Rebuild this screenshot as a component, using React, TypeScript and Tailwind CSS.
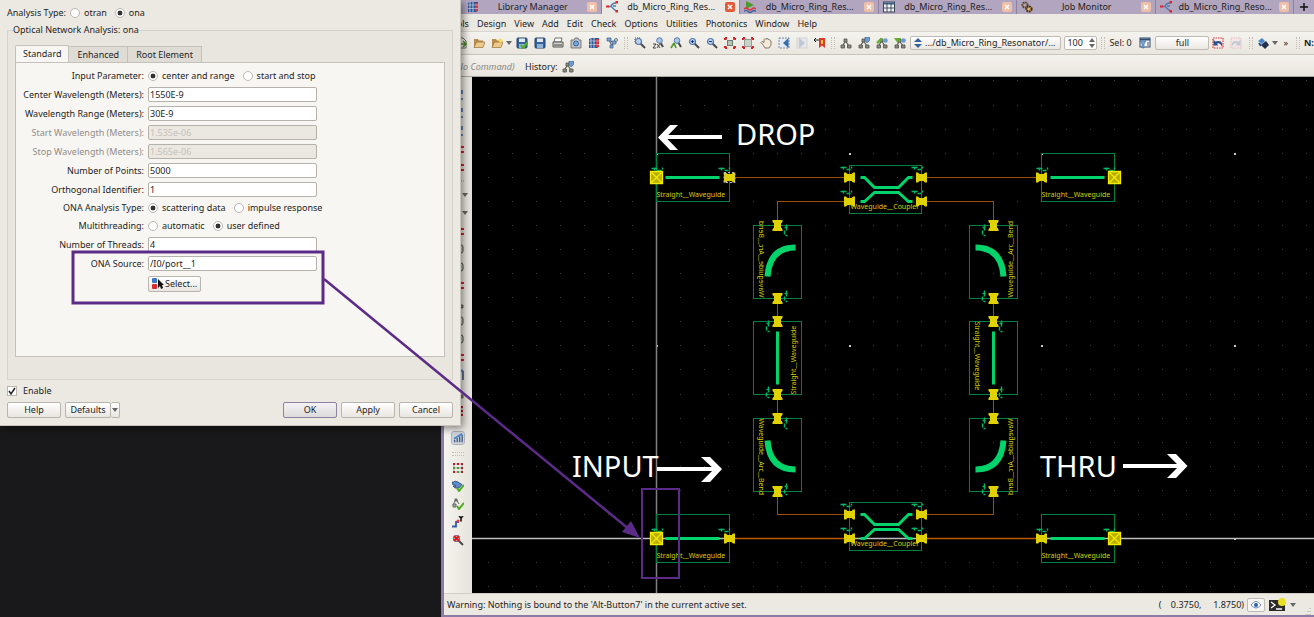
import React, { useId } from 'react';

type IconName =
  | 'library' | 'network' | 'simulate' | 'table' | 'gears' | 'open' | 'folder' | 'folderNew' | 'saveCheck' | 'save'
  | 'print' | 'camera' | 'hierarchy' | 'zoomArea' | 'zoom2x' | 'zoomTree' | 'zoomIn' | 'zoomOut' | 'fit' | 'fitSel'
  | 'hand' | 'prev' | 'next' | 'bookmark' | 'tree' | 'treeDown' | 'treeEdit' | 'treeGreen' | 'filter' | 'undo'
  | 'redo' | 'layers' | 'signal' | 'grid' | 'checkChip' | 'checkTree' | 'wire' | 'probe' | 'blueMark' | 'redMark'
  | 'loop' | 'eye' | 'pick';

const lens = (
  <>
    <path d="M6.5 6.5l4.5 4.5" stroke="#4a4a4a" strokeWidth="2" />
    <circle cx="4.5" cy="4.5" r="3" fill="#b8d2f0" stroke="#5878a8" strokeWidth="1.2" />
  </>
);

const branch = (
  <>
    <path d="M5.500 4L3 8M5.500 4L9 9" stroke="#5f6058" strokeWidth="1.200" />
    <path d="M4 2h3v3H4zM1 8h3.500v3H1zM7.500 8H11v3H7.500z" fill="#8d8e84" stroke="#4f5048" strokeWidth=".8" />
  </>
);

const disk = (
  <>
    <rect x="1" y="1" width="10" height="10" rx="1" fill="#35649c" stroke="#24436b" />
    <rect x="3" y="1.5" width="6" height="3.5" fill="#dfe7ef" />
    <rect x="3" y="7" width="6" height="4" fill="#8fb2d6" />
  </>
);

const folder = (
  <>
    <path d="M1 2h4l1 1.500h4v2H4L2 10H1z" fill="#b98d50" />
    <path d="M1 10.500L3.500 5H12l-2 5.500z" fill="#edc98c" stroke="#9a7038" strokeWidth=".7" />
  </>
);

const corners = <path d="M1 1h2M1 1v2M11 1H9M11 1v2M1 11h2M1 11V9M11 11H9M11 11V9" stroke="#e02020" strokeWidth="2" />;

const glyphs: Record<IconName, React.ReactNode> = {
  library: (
    <>
      <path d="M1 2l2-1h8v9l-2 1H1z" fill="#2f5590" />
      <path d="M3 1v10M6 1v10" stroke="#a9c8ea" />
      <path d="M8 2h3v8H8z" fill="#d6393f" />
      <path d="M1 4h10M1 7.500h10" stroke="#e8eef6" strokeWidth=".5" />
    </>
  ),
  network: (
    <>
      <path d="M2 5.500h3M5 5.500C6 2 8 2 10 2M5 5.500l5 4.500M7 5h3" stroke="#4c7cb4" strokeWidth="1.4" fill="none" />
      <path d="M0 4.500h3v2H0zM9.500 0H12v2.500H9.500zM9.500 9H12v2.500H9.500z" fill="#e3242b" />
    </>
  ),
  simulate: (
    <>
      <path d="M2 0l8 4-8 4z" fill="#4c9a2a" />
      <path d="M0 8q2-2 4 0t4 0 4 0" stroke="#d33" strokeWidth="1.5" fill="none" />
      <path d="M0 10.500q2-2 4 0t4 0 4 0" stroke="#35649c" strokeWidth="1.2" fill="none" />
    </>
  ),
  table: (
    <>
      <rect x=".5" y="1" width="11" height="10" fill="#eef2f6" stroke="#3a4654" />
      <path d="M.5 2.500h11" stroke="#3a5f8c" strokeWidth="2" />
      <path d="M4 2v9M8 2v9M1 7h10" stroke="#3a4654" strokeWidth=".9" />
    </>
  ),
  gears: (
    <>
      <circle cx="4" cy="4" r="2.600" fill="none" stroke="#5e4a28" strokeWidth="2" strokeDasharray="1.800 .6" />
      <circle cx="8" cy="8" r="2.600" fill="#e9b35a" stroke="#3d3320" strokeWidth="2" strokeDasharray="1.800 .6" />
    </>
  ),
  open: (
    <>
      <path d="M1 1h7l3 3v7H1z" fill="#f5f5f2" stroke="#666" />
      <path d="M3 7h8M8 4l3 3-3 3" stroke="#4f8a28" strokeWidth="1.600" fill="none" />
    </>
  ),
  folder,
  folderNew: (
    <>
      {folder}
      <circle cx="9.500" cy="3.500" r="2" fill="#f6df4e" />
    </>
  ),
  saveCheck: (
    <>
      {disk}
      <path d="M5 8l2 3 5-6" stroke="#4fae20" strokeWidth="2" fill="none" />
    </>
  ),
  save: disk,
  print: (
    <>
      <path d="M3 1h7l-1 4H2z" fill="#fafafa" stroke="#555" strokeWidth=".8" />
      <path d="M1 5h10v5H1z" fill="#d5d5cf" stroke="#555" />
      <path d="M2 8h8" stroke="#444" />
    </>
  ),
  camera: (
    <>
      <path d="M1 3h3l1-2h3l1 2h2v8H1z" fill="#bfc3c8" stroke="#666" strokeWidth=".8" />
      <circle cx="6" cy="6.500" r="2.500" fill="#79a8dc" stroke="#35649c" />
    </>
  ),
  hierarchy: (
    <>
      <path d="M3 3l3 6M9 3L6 9M3 3l5 3" stroke="#555" />
      <path d="M1 1h4v3H1zM6 4h4v3H6zM4 8h3v3H4z" fill="#7da4d6" stroke="#3c5f91" strokeWidth=".7" />
      <circle cx="10" cy="3" r="1.500" fill="#c6d8ee" stroke="#456" strokeWidth=".7" />
    </>
  ),
  zoomArea: (
    <>
      <path d="M1 1h5v5H1z" fill="#dfe6ee" stroke="#444" strokeDasharray="1 1" />
      {lens}
    </>
  ),
  zoom2x: (
    <>
      <path d="M8 5l3 5" stroke="#4a4a4a" strokeWidth="2" />
      <circle cx="7.500" cy="3.500" r="2.800" fill="#a8c8ee" stroke="#5878a8" />
      <path d="M1 7h3L1 11h3M5 7l3 4M8 7l-3 4" stroke="#333" fill="none" strokeWidth=".9" />
    </>
  ),
  zoomTree: (
    <>
      <path d="M8 5l3 5" stroke="#4a4a4a" strokeWidth="2" />
      <circle cx="7" cy="3.500" r="2.800" fill="#a8c8ee" stroke="#5878a8" />
      <path d="M4 6l-3 5M4 6l2 5" stroke="#4f9a30" strokeWidth="1.600" />
    </>
  ),
  zoomIn: (
    <>
      {lens}
      <path d="M3 4.500h3M4.500 3v3" stroke="#123c80" />
    </>
  ),
  zoomOut: (
    <>
      {lens}
      <path d="M3 4.500h3" stroke="#123c80" />
    </>
  ),
  fit: (
    <>
      <path d="M2 2l3 3M10 2L7 5M2 10l3-3M10 10L7 7" stroke="#888" />
      <rect x="3.500" y="3.500" width="5" height="5" fill="#b9c4ba" stroke="#6c7c70" />
      {corners}
    </>
  ),
  fitSel: (
    <>
      <rect x="2.500" y="2.500" width="7" height="7" fill="#c8d2c4" stroke="#999" />
      {corners}
    </>
  ),
  hand: (
    <path
      d="M3.500 8.500L1 5.500l1-1 2 1V2.500l1-1 1 1 1-1.500 1 1.500 1-.5 1 1.500 1 .5v4L9 11H5z"
      fill="#f6ead8"
      stroke="#77705f"
      strokeWidth=".9"
    />
  ),
  prev: (
    <>
      <rect x="1" y="1" width="10" height="10" fill="#e3ebf3" stroke="#7c8fa5" strokeDasharray="2 1" />
      <path d="M10.500 1v10L5 6z" fill="#356cac" />
    </>
  ),
  next: (
    <>
      <rect x="1" y="1" width="10" height="10" fill="#e6e6e6" stroke="#d2d4d6" />
      <path d="M3 1v10l6-5z" fill="#bcc8d6" />
    </>
  ),
  bookmark: (
    <>
      <path d="M5 1h6v10L8 8.500 5 11z" fill="#d43b28" />
      <path d="M7 3h2v4H7z" fill="#f5c542" />
      <path d="M0 3h5M2 1L0 3l2 2" stroke="#222" fill="none" />
    </>
  ),
  tree: branch,
  treeDown: (
    <>
      {branch}
      <path d="M7 0h4.500v3.500L9.200 6 7 3.500z" fill="#6c9bd4" stroke="#3c6499" strokeWidth=".7" />
    </>
  ),
  treeEdit: (
    <>
      {branch}
      <path d="M1 6L6 1.500" stroke="#63b030" strokeWidth="2.400" />
      <circle cx="9.500" cy="3.500" r="2.300" fill="#6c9bd4" />
    </>
  ),
  treeGreen: (
    <>
      {branch}
      <path d="M0 1h7L3.500 6z" fill="#63b030" />
      <circle cx="9.500" cy="3.500" r="2.300" fill="#6c9bd4" />
    </>
  ),
  filter: (
    <>
      <rect x="1" y="1" width="10" height="9" fill="#f4f6f8" stroke="#2f4c70" />
      <path d="M1 2.500h10" stroke="#2f4c70" strokeWidth="2" />
      <path d="M1 4h6L5 7v4H3V7z" fill="#7ba7da" stroke="#3c6499" strokeWidth=".6" />
      <path d="M8 6h2M8 8h2" stroke="#555" />
    </>
  ),
  undo: (
    <>
      <rect x="1" y="1" width="10" height="10" fill="#fbeaea" stroke="#e03434" strokeWidth="1.200" strokeDasharray="1.500 1" />
      <path d="M1.500 2.500v6h5L4.800 6.800Q8 5 10 10q1.500-7.500-6.800-5.500z" fill="#28518c" />
    </>
  ),
  redo: (
    <>
      <rect x="1" y="1" width="10" height="10" fill="#f3e9e8" stroke="#e8b8b4" strokeDasharray="1.500 1" />
      <path d="M10.500 2.500v6h-5l1.700-1.700Q4 5 2 10 .5 2.500 8.800 4.500z" fill="#c3cad4" />
    </>
  ),
  layers: (
    <>
      <path d="M1 4l4-3 3 3-3 3z" fill="#4a86c8" />
      <path d="M4 8l5-4 3 4-4 4z" fill="#23324a" />
      <path d="M2 6l2 3" stroke="#1a4f9c" strokeWidth="2" />
    </>
  ),
  signal: (
    <>
      <path d="M2 11V8M5 11V6M8 11V4M11 11V2" stroke="#33527c" strokeWidth="1.500" />
      <path d="M1 7l10-6" stroke="#4a86c8" strokeWidth="2" />
    </>
  ),
  grid: (
    <>
      <path d="M1 1h2v2H1zM5 1h2v2H5zM9 1h2v2H9zM1 9h2v2H1zM9 5h2v2H9zM9 9h2v2H9z" fill="#b3202c" />
      <path d="M1 5h2v2H1zM5 5h2v2H5zM5 9h2v2H5z" fill="#4f9a30" />
      <path d="M3 2h2M7 2h2M3 6h2M7 6h2M3 10h2M7 10h2M2 3v2M2 7v2M10 3v2M10 7v2" stroke="#777" strokeWidth=".6" />
    </>
  ),
  checkChip: (
    <>
      <path d="M0 2h2l1-1 3 1 4 2.500L7 8H3L1 6h3L0 4z" fill="#5b8cc8" stroke="#2b4a75" strokeWidth=".8" />
      <path d="M5 8l2 3 5-6" stroke="#4fae20" strokeWidth="2" fill="none" />
    </>
  ),
  checkTree: (
    <>
      <path d="M4 1L1 7M4 1l3 5M1 6h3v3H1zM3 1h2v2H3z" fill="#aaa" stroke="#666" />
      <path d="M5 8l2 3 5-6" stroke="#4fae20" strokeWidth="2" fill="none" />
    </>
  ),
  wire: (
    <>
      <path d="M0 10.500h4V6h3" stroke="#2f5fa8" strokeWidth="1.800" fill="none" />
      <circle cx="6" cy="5" r="1.500" fill="#e33" />
      <path d="M7 0l2 2 2-2M9 2v3.500" stroke="#111" strokeWidth="1.600" fill="none" />
    </>
  ),
  probe: (
    <>
      {lens}
      <path d="M2 2l5 5M7 2L2 7" stroke="#e01818" strokeWidth="2" />
    </>
  ),
  blueMark: <path d="M1 2h10M1 10h10M8 4h3" stroke="#3a67a8" strokeWidth="1.600" />,
  redMark: (
    <>
      <path d="M1 6h8" stroke="#777" />
      <path d="M9 3h3v2H9zM9 8h3v2H9z" fill="#d8232b" />
    </>
  ),
  loop: <rect x="2" y="2" width="9" height="8" rx="2" fill="#c3d0b4" stroke="#55584e" />,
  eye: (
    <>
      <path d="M1 6q5-7 10 0-5 6-10 0z" fill="#fff" stroke="#7090c0" />
      <circle cx="6" cy="6" r="2" fill="#2f5fa8" />
    </>
  ),
  pick: (
    <>
      <rect x="0" y="0" width="5" height="5" rx="1" fill="#3d78c4" />
      <rect x="0" y="6" width="5" height="5" rx="1" fill="#dd2a2a" />
      <path d="M6 1v9l2-2 1 3 2-1-1-3h2z" fill="#111" />
    </>
  ),
};

const Icon: React.FC<{ name: IconName; className?: string }> = ({ name, className = 'size-3' }) => (
  <svg viewBox="0 0 12 12" fill="none" className={`${className} shrink-0`} aria-hidden="true">
    {glyphs[name]}
  </svg>
);

const Caret = () => (
  <svg viewBox="0 0 6 4" className="h-1 w-[6px] shrink-0" aria-hidden="true">
    <path d="M0 0h6L3 4z" fill="#666" />
  </svg>
);

const Grip: React.FC<{ className?: string }> = ({ className = 'mx-1' }) => (
  <span className={`${className} h-3 w-1 shrink-0 border-x border-dotted border-[#c2beb6]`} />
);

const ToolButton: React.FC<{ name: IconName }> = ({ name }) => (
  <button type="button" aria-label={name} className="flex h-[18px] w-[18px] shrink-0 items-center justify-center">
    <Icon name={name} />
  </button>
);

/* ---------- Simulation dialog ---------- */

const Radio: React.FC<{ name: string; label: string; checked?: boolean }> = ({ name, label, checked }) => (
  <label className="flex items-center gap-1">
    <input
      type="radio"
      name={name}
      defaultChecked={checked}
      className="size-[10px] appearance-none rounded-full border border-[#bab7b1] bg-white checked:bg-[radial-gradient(circle,#333_38%,#fff_48%)]"
    />
    {label}
  </label>
);

const RadioRow: React.FC<{ label: string; name: string; options: string[]; selected: string }> = ({
  label, name, options, selected,
}) => (
  <div className="grid h-[18px] grid-cols-[128px_1fr] items-center gap-x-1" role="radiogroup" aria-label={label}>
    <span className="text-right">{label}</span>
    <div className="flex gap-2">
      {options.map((o) => (
        <Radio key={o} name={name} label={o} checked={o === selected} />
      ))}
    </div>
  </div>
);

const FieldRow: React.FC<{ label: string; value: string; disabled?: boolean }> = ({ label, value, disabled }) => {
  const id = useId();
  return (
    <div className="grid h-[19px] grid-cols-[128px_1fr] items-center gap-x-1">
      <label htmlFor={id} className={`text-right ${disabled ? 'text-[#908d88]' : ''}`}>{label}</label>
      <input
        id={id}
        defaultValue={value}
        disabled={disabled}
        className="h-[15px] w-[169px] rounded-xs border border-[#b5b2ac] bg-white px-px disabled:bg-[#ebe8e2] disabled:text-[#c4c1bb]"
      />
    </div>
  );
};

const dialogButton =
  'h-4 rounded-xs border border-[#b8b5af] bg-linear-to-b from-white to-[#e9e6e1]';

const Dialog = () => (
  <section className="absolute top-0 left-0 w-[461px] border-r border-b border-[#c9c5bd] bg-[#ece9e2] px-[7px] pt-1 pb-[7px] shadow-[2px_2px_8px_rgba(0,0,0,0.5)]">
    <div className="flex h-[18px] items-center gap-2" role="radiogroup" aria-label="Analysis Type:">
      <span className="-mr-1">Analysis Type:</span>
      <Radio name="analysis" label="otran" />
      <Radio name="analysis" label="ona" checked />
    </div>

    <fieldset className="border border-[#d6d3cc] bg-[#e9e6df] px-[7px] pb-[22px]">
      <legend className="ml-[-2px] h-4 leading-4">Optical Network Analysis: ona</legend>
      <div className="mt-[7px] flex items-end" role="tablist">
        <button type="button" role="tab" aria-selected="true" className="h-[17px] rounded-t-xs border border-b-0 border-[#c4c1ba] bg-[#f8f6f2] px-[7px]">
          Standard
        </button>
        <button type="button" role="tab" className="h-4 border border-b-0 border-l-0 border-[#c4c1ba] bg-[#dfdcd6] px-2">
          Enhanced
        </button>
        <button type="button" role="tab" className="h-4 border border-b-0 border-l-0 border-[#c4c1ba] bg-[#dfdcd6] px-2">
          Root Element
        </button>
      </div>
      <div className="border border-[#c4c1ba] bg-[#f8f6f2] pt-1 pb-16">
        <RadioRow label="Input Parameter:" name="input" options={['center and range', 'start and stop']} selected="center and range" />
        <FieldRow label="Center Wavelength (Meters):" value="1550E-9" />
        <FieldRow label="Wavelength Range (Meters):" value="30E-9" />
        <FieldRow label="Start Wavelength (Meters):" value="1.535e-06" disabled />
        <FieldRow label="Stop Wavelength (Meters):" value="1.565e-06" disabled />
        <FieldRow label="Number of Points:" value="5000" />
        <FieldRow label="Orthogonal Identifier:" value="1" />
        <RadioRow label="ONA Analysis Type:" name="ona" options={['scattering data', 'impulse response']} selected="scattering data" />
        <RadioRow label="Multithreading:" name="threads" options={['automatic', 'user defined']} selected="user defined" />
        <FieldRow label="Number of Threads:" value="4" />
        <FieldRow label="ONA Source:" value="/I0/port__1" />
        <button type="button" className={`${dialogButton} mt-[3px] ml-[132px] flex items-center gap-px px-[3px]`}>
          <Icon name="pick" />
          Select...
        </button>
      </div>
    </fieldset>

    <label className="mt-[5px] flex items-center gap-[6px]">
      <span className="relative size-[10px]">
        <input type="checkbox" defaultChecked className="block size-[10px] appearance-none border border-[#bab7b1] bg-white" />
        <svg viewBox="0 0 10 10" className="pointer-events-none absolute inset-0" aria-hidden="true">
          <path d="M2 5l2 3 4-6" fill="none" stroke="#222" strokeWidth="1.500" />
        </svg>
      </span>
      Enable
    </label>

    <div className="mt-[5px] flex gap-1">
      <button type="button" className={`${dialogButton} w-[54px]`}>Help</button>
      <div className="flex">
        <button type="button" className={`${dialogButton} w-[46px]`}>Defaults</button>
        <button type="button" aria-label="Defaults menu" className={`${dialogButton} flex w-[9px] items-center justify-center border-l-0`}>
          <Caret />
        </button>
      </div>
      <button type="button" className="ml-auto h-4 w-[54px] rounded-xs border border-[#8c83a0] bg-linear-to-b from-[#f4f2f4] to-[#dedbdd]">
        OK
      </button>
      <button type="button" className={`${dialogButton} w-[54px]`}>Apply</button>
      <button type="button" className={`${dialogButton} w-[54px]`}>Cancel</button>
    </div>
  </section>
);

/* ---------- Schematic drawing ---------- */

// The sheet is a regular lattice, part positions are given in lattice steps.
const STEP = 24.08;
const gx = (k: number) => Math.round(656.2 + k * STEP) + 0.5;
const gy = (k: number) => Math.round(538 - k * STEP) + 0.5;

const Pin: React.FC<{ x: number; y: number; turned?: boolean; boxed?: boolean; selected?: boolean }> = ({
  x, y, turned, boxed, selected,
}) => (
  <g transform={`translate(${x} ${y}) ${turned ? 'rotate(90)' : ''}`}>
    <path d="M-5.500-5H-3.500L-2-3.500H2L3.500-5H5.500V5H3.500L2 3.500H-2L-3.500 5H-5.500z" fill="#e0d200" />
    {boxed && (
      <path d="M-6-6H6V6H-6zM-5-5L5 5M5-5L-5 5" fill="#b8ac00" stroke="#f4ec00" strokeWidth="1.300" />
    )}
    {selected && <path d="M-5.500-5H5.500V5H-5.500z" fill="none" stroke="#b8b8d8" strokeDasharray="2 2" />}
  </g>
);

const PortMark: React.FC<{ x: number; y: number; transform?: string }> = ({ x, y, transform = '' }) => (
  <path
    transform={`translate(${x} ${y}) ${transform}`}
    d="M-5 0H1M-2-1V2M1 2H5M6-1V1"
    fill="none"
    stroke="#00b865"
    strokeWidth="1.4"
  />
);

const Name: React.FC<{ x: number; y: number; children: string; transform?: string }> = ({ x, y, children, transform = '' }) => (
  <text
    transform={`translate(${x} ${y}) ${transform}`}
    className="fill-[#d8ce00] font-['Noto_Sans',sans-serif] text-[7px]"
  >
    {children}
  </text>
);

const Straight: React.FC<{ x: number; y: number; boxed: 'left' | 'right'; selected?: boolean }> = ({ x, y, boxed, selected }) => (
  <g>
    <rect x={x} y={y - 24} width="73" height="48" className="fill-none stroke-[#00823f]" />
    <path d={`M${x + 9} ${y}H${x + 63}`} stroke="#00d46a" strokeWidth="3" />
    <PortMark x={x} y={y - 9} />
    <PortMark x={x + 67} y={y - 9} />
    <Name x={x} y={y + 19}>Straight__Waveguide</Name>
    <Pin x={x} y={y} boxed={boxed === 'left'} />
    <Pin x={x + 73} y={y} boxed={boxed === 'right'} selected={selected} />
  </g>
);

const Coupler: React.FC<{ x: number; y: number }> = ({ x, y }) => (
  <g>
    <rect x={x} y={y - 12} width="72" height="48" className="fill-none stroke-[#00823f]" />
    <path
      d={`M${x + 11} ${y}h4l10 10h24l10-10h4M${x + 11} ${y + 24}h4l10-9h24l10 9h4`}
      fill="none"
      stroke="#00d46a"
      strokeWidth="3"
    />
    <Name x={x + 1} y={y + 31}>Waveguide__Coupler</Name>
    {[0, 24].map((dy) => (
      <g key={dy}>
        <PortMark x={x - 4} y={y + dy - 10} />
        <PortMark x={x + 67} y={y + dy - 10} />
        <Pin x={x} y={y + dy} />
        <Pin x={x + 72} y={y + dy} />
      </g>
    ))}
  </g>
);

const Vertical: React.FC<{ x: number; y: number; body: string; width: number; markX: number; children: React.ReactNode }> = ({
  x, y, body, width, markX, children,
}) => (
  <g>
    <rect x={x - 24} y={y} width="48" height="73" className="fill-none stroke-[#00823f]" />
    <path transform={`translate(${x} ${y})`} d={body} fill="none" stroke="#00d46a" strokeWidth={width} />
    {children}
    <PortMark x={x + markX} y={y + 4} transform="rotate(90)" />
    <PortMark x={x + markX} y={y + 70} transform="rotate(90)" />
    <Pin x={x} y={y} turned />
    <Pin x={x} y={y + 73} turned />
  </g>
);

const gridDots = () => {
  const dots: React.ReactNode[] = [];
  for (let i = -7; i <= 27; i++) {
    for (let j = -2; j <= 19; j++) {
      const major = i % 8 === 0 && j % 8 === 0;
      dots.push(
        <rect key={`${i},${j}`} x={gx(i) - 0.5} y={gy(j) - 0.5} width={major ? 2 : 1} height={major ? 2 : 1} fill={major ? '#c8c8c8' : '#3c3c3c'} />,
      );
    }
  }
  return dots;
};

const Schematic = () => {
  const left = gx(5);
  const right = gx(14);
  const top = gy(15);
  const bottom = gy(0);
  return (
    <svg className="block h-full w-full bg-black" role="img" aria-label="Micro ring resonator schematic">
      <g transform="translate(-472 -77)">
        {gridDots()}
        <path d={`M${gx(0)} 77V593`} stroke="#808080" strokeWidth="1.500" />
        <path d={`M472 ${bottom}H${gx(3)}M${gx(8)} ${bottom}H${gx(11)}M${gx(16)} ${bottom}H2400`} stroke="#bdbdbd" strokeWidth="1.300" />

        <path
          d={`M${gx(3)} ${top}H${gx(8)}M${gx(11)} ${top}H${gx(16)}M${gx(8)} ${gy(14)}H${left}V${gy(13)}M${gx(11)} ${gy(14)}H${right}V${gy(13)}M${left} ${gy(10)}V${gy(9)}M${right} ${gy(10)}V${gy(9)}M${left} ${gy(6)}V${gy(5)}M${right} ${gy(6)}V${gy(5)}M${left} ${gy(2)}V${gy(1)}H${gx(8)}M${right} ${gy(2)}V${gy(1)}H${gx(11)}`}
          fill="none"
          stroke="#a04e08"
        />
        <path d={`M${gx(3)} ${bottom}H${gx(8)}M${gx(11)} ${bottom}H${gx(16)}`} stroke="#c05a00" strokeWidth="1.300" />

        <Straight x={gx(0)} y={top} boxed="left" selected />
        <Straight x={gx(16)} y={top} boxed="right" />
        <Straight x={gx(0)} y={bottom} boxed="left" />
        <Straight x={gx(16)} y={bottom} boxed="right" />
        <Coupler x={gx(8)} y={top} />
        <Coupler x={gx(8)} y={gy(1)} />

        <Vertical x={left} y={gy(13)} body="M18 22Q-8 22-10 51" width={6} markX={9}>
          <Name x={left - 19} y={gy(10)} transform="rotate(-90) scale(1 -1)">Waveguide__Arc__Bend</Name>
        </Vertical>
        <Vertical x={right} y={gy(13)} body="M-18 22Q8 22 10 51" width={6} markX={-9}>
          <Name x={right + 19} y={gy(10)} transform="rotate(-90)">Waveguide__Arc__Bend</Name>
        </Vertical>
        <Vertical x={left} y={gy(9)} body="M0 10V63" width={3} markX={-9}>
          <Name x={left + 18} y={gy(6)} transform="rotate(-90)">Straight__Waveguide</Name>
        </Vertical>
        <Vertical x={right} y={gy(9)} body="M0 10V63" width={3} markX={8}>
          <Name x={right - 19} y={gy(9)} transform="rotate(90)">Straight__Waveguide</Name>
        </Vertical>
        <Vertical x={left} y={gy(5)} body="M-10 22Q-8 51 18 51" width={6} markX={9}>
          <Name x={left - 19} y={gy(5)} transform="rotate(90)">Waveguide__Arc__Bend</Name>
        </Vertical>
        <Vertical x={right} y={gy(5)} body="M10 22Q8 51-18 51" width={6} markX={-9}>
          <Name x={right + 19} y={gy(5)} transform="rotate(90) scale(1 -1)">Waveguide__Arc__Bend</Name>
        </Vertical>
      </g>
    </svg>
  );
};

/* ---------- Schematic editor window ---------- */

const windowTabs: { title: string; icon: IconName; active?: boolean }[] = [
  { title: 'Library Manager', icon: 'library' },
  { title: 'db_Micro_Ring_Res...', icon: 'network', active: true },
  { title: 'db_Micro_Ring_Res...', icon: 'simulate' },
  { title: 'db_Micro_Ring_Res...', icon: 'table' },
  { title: 'Job Monitor', icon: 'gears' },
  { title: 'db_Micro_Ring_Reso...', icon: 'network' },
];

const menus = ['Tools', 'Design', 'View', 'Add', 'Edit', 'Check', 'Options', 'Utilities', 'Photonics', 'Window', 'Help'];

const fileTools: IconName[] = ['saveCheck', 'save', 'print', 'camera', 'library', 'hierarchy'];
const viewTools: IconName[] = ['zoomArea', 'zoom2x', 'zoomTree', 'zoomIn', 'zoomOut', 'fit', 'fitSel', 'hand', 'prev', 'next', 'bookmark'];
const treeTools: IconName[] = ['tree', 'treeDown', 'treeEdit', 'treeGreen'];

const sideTop: IconName[] = ['blueMark', 'blueMark', 'blueMark', 'redMark', 'redMark'];
const sideMiddle: IconName[] = ['redMark', 'loop', 'loop', 'redMark', 'tree', 'loop', 'loop', 'redMark', 'signal', 'tree', 'grid'];
const sideBottom: IconName[] = ['grid', 'checkChip', 'checkTree', 'wire', 'probe'];

const Toolbar = () => (
  <div className="flex h-6 items-center border-t border-b border-t-[#d9d5cd] border-b-[#c8c4bc] bg-linear-to-b from-[#f5f3ee] to-[#e9e6df] pl-2">
    <ToolButton name="open" />
    <ToolButton name="folder" />
    <ToolButton name="folderNew" />
    <Caret />
    <div className="ml-px flex">
      {fileTools.map((t) => <ToolButton key={t} name={t} />)}
    </div>
    <Grip className="mx-[3px]" />
    {viewTools.map((t) => <ToolButton key={t} name={t} />)}
    <Grip className="mx-[2px]" />
    {treeTools.map((t) => <ToolButton key={t} name={t} />)}
    <div className="relative ml-px flex h-[14px] min-w-0 flex-1 items-center">
      <select
        aria-label="Current cellview"
        className="h-[14px] w-full appearance-none rounded-xs border border-[#bebbb4] bg-linear-to-b from-white to-[#ebe8e3] pl-[14px] text-ellipsis"
      >
        <option>.../db_Micro_Ring_Resonator/...</option>
      </select>
      <svg viewBox="0 0 8 10" className="pointer-events-none absolute left-1 h-[10px] w-2" aria-hidden="true">
        <path d="M4 0l4 4H0zM0 6h8l-4 4z" fill="#35649c" />
      </svg>
    </div>
    <div className="ml-[3px] flex h-[14px] w-[33px] shrink-0 rounded-xs border border-[#bebbb4] bg-white">
      <input aria-label="Zoom percent" defaultValue="100" className="min-w-0 flex-1 pl-[2px]" />
      <div className="flex w-[9px] flex-col items-center justify-center gap-[2px]">
        <span className="rotate-180"><Caret /></span>
        <Caret />
      </div>
    </div>
    <Grip className="mx-1" />
    <span className="w-[27px] shrink-0">Sel: 0</span>
    <ToolButton name="filter" />
    <button type="button" className="ml-px h-[14px] w-[54px] shrink-0 rounded-xs border border-[#bebbb4] bg-linear-to-b from-white to-[#ebe8e3]">
      full
    </button>
    <ToolButton name="undo" />
    <ToolButton name="redo" />
    <Grip className="mr-px ml-1" />
    <ToolButton name="layers" />
    <Caret />
    <span className="mx-[5px] shrink-0">»</span>
    <Grip className="mr-1 ml-[3px]" />
    <span className="w-[10px] shrink-0 overflow-hidden font-bold">N:</span>
  </div>
);

const SideBar = () => (
  <div className="flex w-7 shrink-0 flex-col items-center bg-linear-to-r from-[#f6f4ef] to-[#e6e3dc] pt-[9px]">
    {sideTop.map((n, i) => <ToolButton key={i} name={n} />)}
    <span className="my-1 h-[2px] w-3 border-y border-dotted border-[#c2beb6]" />
    {[0, 1].map((i) => (
      <button key={i} type="button" aria-label="More" className="flex h-[18px] w-full items-center justify-end pr-1">
        <Caret />
      </button>
    ))}
    {sideMiddle.map((n, i) => <ToolButton key={i} name={n} />)}
    <button type="button" aria-label="signal" className="mt-3 flex size-3 items-center justify-center rounded-xs bg-[#cfd5dc] outline outline-[#aab0b6]">
      <Icon name="signal" className="size-[10px]" />
    </button>
    <span className="mt-2 mb-[3px] h-1 w-3 border-y border-dotted border-[#c2beb6]" />
    {sideBottom.map((n) => <ToolButton key={n} name={n} />)}
  </div>
);

const Editor = () => (
  <main className="absolute inset-y-0 right-0 left-[441px] flex flex-col border-b-2 border-l-[3px] border-[#8c7ba5] bg-[#ece9e2]">
    <div className="flex h-[14px] bg-[#b1a5bf] pl-[19px]" role="tablist">
      {windowTabs.map((t, i) => (
        <div
          key={i}
          className={`flex flex-1 items-center border-r border-[#8f829f] px-1 ${t.active ? 'bg-[#ece9e4]' : ''}`}
        >
          <Icon name={t.icon} />
          <button type="button" role="tab" aria-selected={!!t.active} className="flex-1">{t.title}</button>
          <button
            type="button"
            aria-label="Close tab"
            className={`flex size-[10px] items-center justify-center rounded-xs ${t.active ? 'bg-[#e25a38]' : 'bg-[#efbfa8]'}`}
          >
            <svg viewBox="0 0 6 6" className="size-[6px]" aria-hidden="true">
              <path d="M1 1l4 4M5 1L1 5" stroke="#fff" strokeWidth="1.500" />
            </svg>
          </button>
        </div>
      ))}
      <button type="button" aria-label="New tab" className="flex w-5 items-center justify-center">
        <svg viewBox="0 0 8 8" className="size-2" aria-hidden="true">
          <path d="M4 0v8M0 4h8" stroke="#111" strokeWidth="1.500" />
        </svg>
      </button>
    </div>

    <nav className="flex h-[17px] items-center gap-2 pt-[2px] pl-[3px]">
      {menus.map((m) => <button key={m} type="button">{m}</button>)}
    </nav>

    <Toolbar />

    <div className="flex h-[22px] items-center border-b border-[#a8a59e] bg-linear-to-b from-[#f4f2ed] to-[#e9e6df] pt-[2px] pl-[10px]">
      <span className="w-[65px] text-[#8c8983] italic">(No Command)</span>
      <span className="flex items-center gap-1 pl-[6px]">
        History:
        <Icon name="treeDown" />
      </span>
    </div>

    <div className="flex min-h-0 flex-1">
      <SideBar />
      <div className="min-w-0 flex-1">
        <Schematic />
      </div>
    </div>

    <footer className="flex h-[22px] items-center border-t border-[#d2cec6] pr-[3px] pl-[3px]">
      <span>Warning: Nothing is bound to the 'Alt-Button7' in the current active set.</span>
      <span className="ml-auto whitespace-pre">{'(    0.3750,     1.8750)'}</span>
      <button type="button" aria-label="Show" className="ml-[3px] flex h-[14px] w-[18px] items-center justify-center rounded-xs border border-[#bebbb4] bg-[#f6f5f2]">
        <Icon name="eye" />
      </button>
      <button type="button" aria-label="Console" className="mx-1">
        <svg viewBox="0 0 17 13" className="h-[13px] w-[17px]" aria-hidden="true">
          <rect x="0" y="2" width="16" height="11" fill="#2c2c2c" />
          <path d="M2 4l4 3-4 3M7 11h6" stroke="#fff" strokeWidth="1.300" fill="none" />
          <circle cx="13" cy="4" r="4" fill="#e8e020" />
        </svg>
      </button>
      <Caret />
      <svg viewBox="0 0 8 8" className="ml-[7px] size-2 self-end" aria-hidden="true">
        <path d="M7 1v1M5 4v1M7 4v1M3 7v1M5 7v1M7 7v1" stroke="#aaa69e" strokeWidth="1" />
      </svg>
    </footer>
  </main>
);

/* ---------- Callouts drawn over both windows ---------- */

const Callouts = () => (
  <svg className="pointer-events-none absolute inset-0 h-full w-full">
    <g fill="none" stroke="#5b2b87">
      <rect x="73" y="252" width="250" height="51" strokeWidth="3" />
      <rect x="642" y="489" width="37" height="89" strokeWidth="2" />
      <path d="M324 279L630 530" strokeWidth="2.500" />
    </g>
    <path d="M640 538L622 532L631 521z" fill="#5b2b87" />
    <g fill="none" stroke="#fff" strokeWidth="4">
      <path d="M722 137H664" />
      <path d="M657 469H717" />
      <path d="M1123 466H1183" />
    </g>
    <g fill="#fff">
      <path d="M658 137.500L670 125h8L666 137.500L678 150h-8z" />
      <path d="M722 469L710 457h-9L714 469L701 482h9z" />
      <path d="M1187.500 466L1176 454h-9L1179 466L1167 478h9z" />
    </g>
    <g className="fill-white font-['Noto_Sans',sans-serif] text-[29px]">
      <text x="736" y="145">DROP</text>
      <text x="572" y="477">INPUT</text>
      <text x="1040" y="477">THRU</text>
    </g>
  </svg>
);

const App: React.FC = () => (
  <div className="relative h-screen min-h-[430px] overflow-hidden bg-[#19191b] font-['Noto_Sans','DejaVu_Sans',sans-serif] text-[9px] leading-3 whitespace-nowrap text-[#1e1e1e]">
    <Editor />
    <Dialog />
    <Callouts />
  </div>
);

export default App;
